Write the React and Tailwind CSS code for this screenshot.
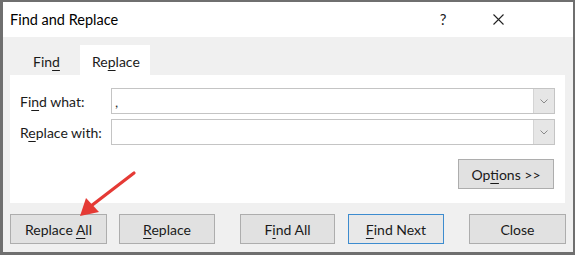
import React from "react";

const font = { fontFamily: 'Lato, "Noto Sans", sans-serif' };

function U({ children }) {
  return <span className="underline underline-offset-[3px] decoration-1">{children}</span>;
}

function Btn({ children, className = "" }) {
  return (
    <div
      className={
        "flex h-[30px] items-center justify-center border text-[14px] text-[#1a1a1a] " +
        className
      }
    >
      <span>{children}</span>
    </div>
  );
}

function Combo({ value }) {
  return (
    <div className="flex h-[26px] flex-1 border border-[#c4c4c4] bg-white">
      <div className="flex flex-1 items-center pl-[3px] text-[14px] text-[#333]">{value}</div>
      <div className="flex w-[21px] items-center justify-center border-l border-[#d4d4d4] bg-[#e6e6e6]">
        <svg width="8" height="5" viewBox="0 0 8 5">
          <path d="M0.5 0.5 L4 4 L7.5 0.5" fill="none" stroke="#8a8a8a" strokeWidth="1" />
        </svg>
      </div>
    </div>
  );
}

export default function App() {
  return (
    <div
      style={font}
      className="relative h-[255px] w-[575px] overflow-hidden border-b-[3px] border-l-[3px] border-r-[2px] border-t-[2px] border-[#6f6f6f] bg-[#f0f0f0]"
    >
      {/* title bar */}
      <div className="flex h-[35px] items-center bg-white pl-[7px]">
        <div className="flex-1 text-[14.5px] text-black">Find and Replace</div>
        <div className="w-[20px] text-center text-[15px] text-[#222]">?</div>
        <div className="ml-[35px] flex w-[20px] items-center justify-center">
          <svg width="11" height="11" viewBox="0 0 11 11">
            <path d="M0.5 0.5 L10.5 10.5 M10.5 0.5 L0.5 10.5" stroke="#222" strokeWidth="1.1" />
          </svg>
        </div>
        <div className="w-[65px]" />
      </div>

      {/* body */}
      <div className="px-[7px] pt-[8px]">
        {/* tabs */}
        <div className="flex h-[30px] items-stretch pl-[11px] text-[14px] text-[#1a1a1a]">
          <div className="flex w-[59px] items-center pl-[12px] pt-[2px]">
            <span>
              Fin<U>d</U>
            </span>
          </div>
          <div className="flex w-[70px] items-center bg-white pl-[12px] pt-[2px]">
            <span>
              Re<U>p</U>lace
            </span>
          </div>
        </div>

        {/* panel */}
        <div className="mr-[1px] flex h-[128px] flex-col bg-white px-[10px] pt-[13px]">
          <div className="flex items-center">
            <div className="w-[91px] text-[14px] text-[#1a1a1a]">
              Fi<U>n</U>d what:
            </div>
            <Combo value="," />
          </div>
          <div className="mt-[5px] flex items-center">
            <div className="w-[91px] text-[14px] text-[#1a1a1a]">
              R<U>e</U>place with:
            </div>
            <Combo value="" />
          </div>
          <div className="mt-[14px] flex justify-end pr-[1px]">
            <Btn className="w-[96px] border-[#adadad] bg-[#e1e1e1]">
              Op<U>t</U>ions &gt;&gt;
            </Btn>
          </div>
        </div>

        {/* bottom buttons */}
        <div className="mt-[11px] flex">
          <Btn className="w-[97px] border-[#adadad] bg-[#e1e1e1]">
            Replace <U>A</U>ll
          </Btn>
          <Btn className="ml-[12px] w-[96px] border-[#adadad] bg-[#e1e1e1]">
            <U>R</U>eplace
          </Btn>
          <Btn className="ml-[25px] w-[95px] border-[#adadad] bg-[#e1e1e1]">
            F<U>i</U>nd All
          </Btn>
          <Btn className="ml-[13px] w-[96px] border-[#3d8ccf] bg-[#e8e8e8]">
            <U>F</U>ind Next
          </Btn>
          <Btn className="ml-[25px] w-[97px] border-[#adadad] bg-[#e1e1e1]">Close</Btn>
        </div>
      </div>

      {/* red annotation arrow */}
      <svg
        className="pointer-events-none absolute left-0 top-0"
        width="575"
        height="255"
        viewBox="0 0 575 255"
      >
        <line x1="131" y1="171" x2="88" y2="204" stroke="#e53a35" strokeWidth="3.2" strokeLinecap="round" />
        <polygon points="77,214 83,196 96,210" fill="#e53a35" />
      </svg>
    </div>
  );
}
